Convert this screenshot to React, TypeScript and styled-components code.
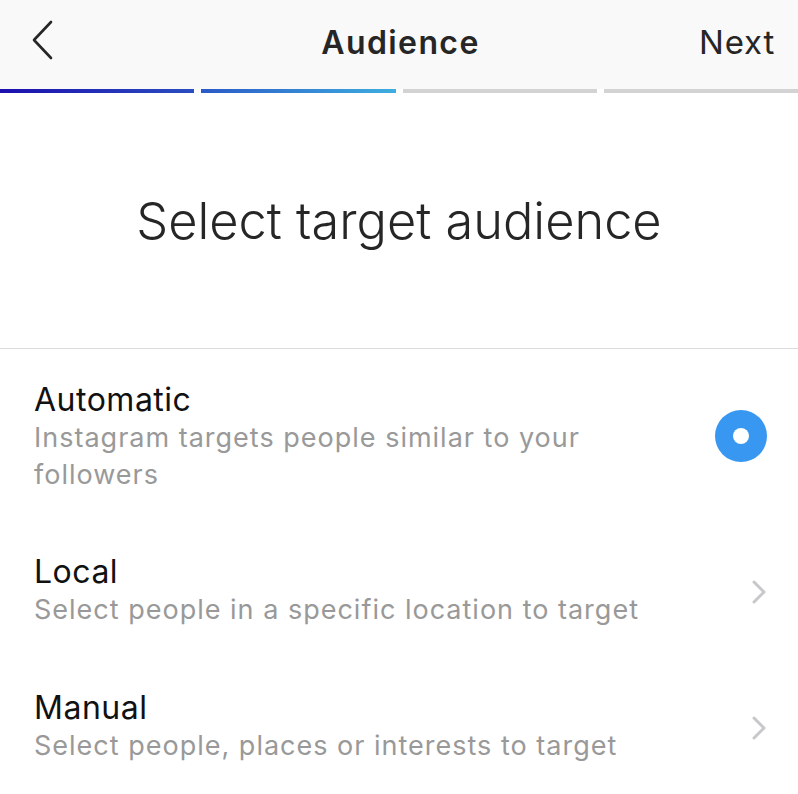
import React from "react";
import styled, { createGlobalStyle } from "styled-components";

const Global = createGlobalStyle`
  html, body { margin: 0; padding: 0; background: #ffffff; }
  body { font-family: Inter, Roboto, "Noto Sans", sans-serif; -webkit-font-smoothing: antialiased; }
`;

const Page = styled.div`
  width: 798px;
  min-height: 794px;
  background: #ffffff;
  display: flex;
  flex-direction: column;
`;

const NavBar = styled.header`
  height: 89px;
  background: #f9f9f9;
  display: grid;
  grid-template-columns: 1fr auto 1fr;
  align-items: center;
  padding: 0 23px 0 26px;
  box-sizing: border-box;
`;

const BackButton = styled.button`
  justify-self: start;
  background: none;
  border: none;
  padding: 0;
  width: 32px;
  height: 44px;
  display: flex;
  align-items: center;
  justify-content: center;
  margin-top: -10px;
`;

const NavTitle = styled.h1`
  margin: -5px 0 0 0;
  font-size: 32px;
  font-weight: 600;
  color: #262626;
  letter-spacing: 1.4px;
`;

const NextButton = styled.button`
  justify-self: end;
  background: none;
  border: none;
  padding: 0;
  margin-top: -5px;
  font-family: inherit;
  font-size: 33px;
  font-weight: 400;
  letter-spacing: 0.8px;
  color: #262626;
`;

const Progress = styled.div`
  display: flex;
  gap: 7px;
  height: 4px;
  background: #ffffff;
`;

const Segment = styled.div<{ $fill: string }>`
  flex: 1;
  background: ${(p) => p.$fill};
`;

const Heading = styled.h2`
  margin: 0;
  height: 256px;
  box-sizing: border-box;
  padding-top: 98px;
  text-align: center;
  font-size: 50.5px;
  font-weight: 300;
  color: #262626;
  line-height: 60px;
  border-bottom: 1px solid #dbdbdb;
`;

const List = styled.div`
  display: flex;
  flex-direction: column;
  padding-top: 32px;
`;

const Option = styled.div<{ $h: number }>`
  display: flex;
  align-items: flex-start;
  height: ${(p) => p.$h}px;
  padding: 0 31px 0 34px;
  box-sizing: border-box;
`;

const OptionText = styled.div`
  flex: 1;
  display: flex;
  flex-direction: column;
`;

const OptionTitle = styled.div`
  font-size: 32px;
  line-height: 38px;
  letter-spacing: 0.5px;
  color: #111111;
  font-weight: 400;
`;

const OptionDesc = styled.div`
  font-size: 27px;
  line-height: 37px;
  letter-spacing: 1px;
  color: #999999;
  max-width: 630px;
`;

const Radio = styled.div`
  width: 52px;
  height: 52px;
  margin-top: 29px;
  border-radius: 50%;
  background: #3897f0;
  display: flex;
  align-items: center;
  justify-content: center;
  &::after {
    content: "";
    width: 16px;
    height: 16px;
    border-radius: 50%;
    background: #ffffff;
  }
`;

const Chevron = styled.div`
  width: 30px;
  margin-top: 26px;
  display: flex;
  justify-content: flex-end;
`;

const BackIcon = () => (
  <svg width="24" height="40" viewBox="0 0 24 40">
    <polyline points="21,2 4,20 21,38" fill="none" stroke="#262626" strokeWidth="2.6" strokeLinecap="round" strokeLinejoin="round" />
  </svg>
);

const ChevronIcon = () => (
  <svg width="16" height="26" viewBox="0 0 16 26">
    <polyline points="3,3 13,13 3,23" fill="none" stroke="#c7c7cc" strokeWidth="3" strokeLinecap="round" strokeLinejoin="round" />
  </svg>
);

export default function App() {
  return (
    <Page>
      <Global />
      <NavBar>
        <BackButton aria-label="Back">
          <BackIcon />
        </BackButton>
        <NavTitle>Audience</NavTitle>
        <NextButton>Next</NextButton>
      </NavBar>
      <Progress>
        <Segment $fill="linear-gradient(90deg, #1c0fae 0%, #2a4ec0 100%)" />
        <Segment $fill="linear-gradient(90deg, #2b5ac6 0%, #3eaee0 100%)" />
        <Segment $fill="#d3d3d3" />
        <Segment $fill="#d3d3d3" />
      </Progress>
      <Heading>Select target audience</Heading>
      <List>
        <Option $h={172}>
          <OptionText>
            <OptionTitle>Automatic</OptionTitle>
            <OptionDesc>Instagram targets people similar to your followers</OptionDesc>
          </OptionText>
          <Radio />
        </Option>
        <Option $h={136}>
          <OptionText>
            <OptionTitle>Local</OptionTitle>
            <OptionDesc>Select people in a specific location to target</OptionDesc>
          </OptionText>
          <Chevron>
            <ChevronIcon />
          </Chevron>
        </Option>
        <Option $h={136}>
          <OptionText>
            <OptionTitle>Manual</OptionTitle>
            <OptionDesc>Select people, places or interests to target</OptionDesc>
          </OptionText>
          <Chevron>
            <ChevronIcon />
          </Chevron>
        </Option>
      </List>
    </Page>
  );
}
